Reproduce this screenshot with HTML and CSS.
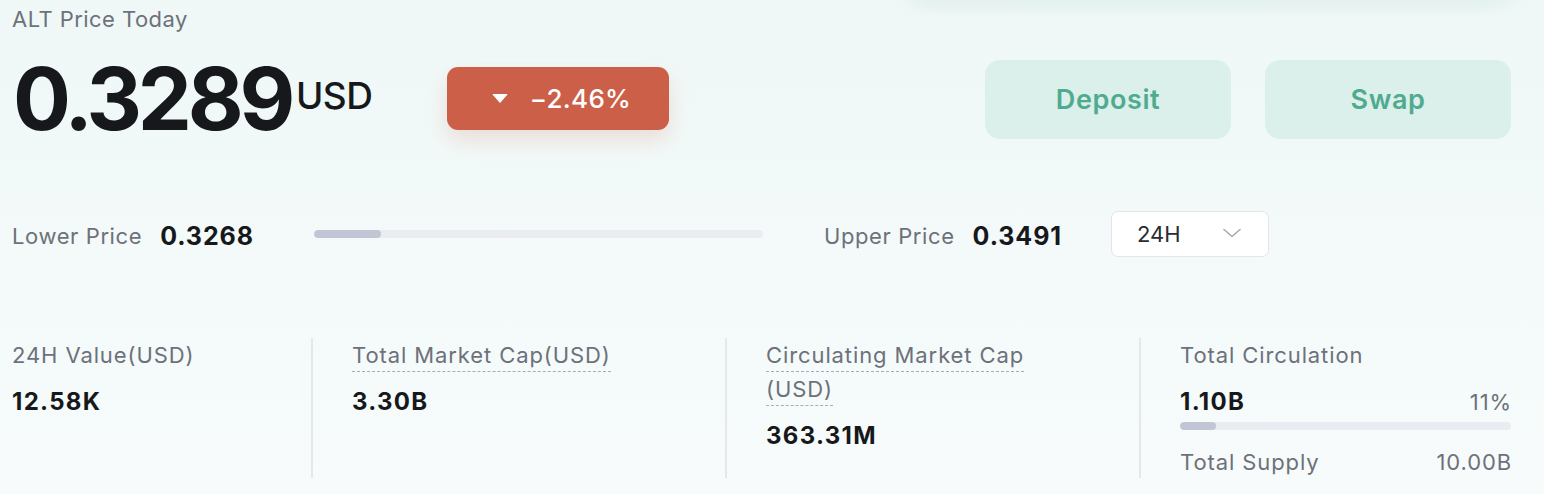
FILE: index.html
```html
<!DOCTYPE html>
<html lang="en">
<head>
<meta charset="utf-8">
<title>ALT Price Today</title>
<link rel="stylesheet" href="styles.css">
</head>
<body>
<div class="glow"></div>
<main class="page">
  <div class="title">ALT Price Today</div>

  <section class="hero">
    <div class="price">
      <span class="price-num">0.3289</span>
      <span class="price-unit">USD</span>
    </div>
    <div class="change">
      <svg class="change-icon" width="16" height="9" viewBox="0 0 16 9"><path d="M1 0.5 H15 L8 8.5 Z" fill="#fff" stroke="#fff" stroke-width="1" stroke-linejoin="round"/></svg>
      <span class="change-text">−2.46%</span>
    </div>
    <div class="actions">
      <button class="btn">Deposit</button>
      <button class="btn">Swap</button>
    </div>
  </section>

  <section class="range">
    <div class="range-side range-low">
      <span class="range-label">Lower Price</span>
      <span class="range-value">0.3268</span>
    </div>
    <div class="track range-track"><div class="track-fill" style="width:15%"></div></div>
    <div class="range-side range-high">
      <span class="range-label">Upper Price</span>
      <span class="range-value">0.3491</span>
    </div>
    <div class="select">
      <span>24H</span>
      <svg width="18" height="10" viewBox="0 0 18 10"><path d="M1 1.5 L9 8.5 L17 1.5" fill="none" stroke="#a6aab3" stroke-width="1.6" stroke-linecap="round" stroke-linejoin="round"/></svg>
    </div>
  </section>

  <section class="stats">
    <div class="stat stat-first">
      <div class="stat-label">24H Value(USD)</div>
      <div class="stat-value">12.58K</div>
    </div>
    <div class="stat">
      <div class="stat-label"><span class="dashed">Total Market Cap(USD)</span></div>
      <div class="stat-value">3.30B</div>
    </div>
    <div class="stat">
      <div class="stat-label narrow"><span class="dashed">Circulating Market Cap (USD)</span></div>
      <div class="stat-value">363.31M</div>
    </div>
    <div class="stat">
      <div class="stat-label">Total Circulation</div>
      <div class="stat-row">
        <span class="stat-value">1.10B</span>
        <span class="stat-muted end">11%</span>
      </div>
      <div class="track circ-track"><div class="track-fill" style="width:11%"></div></div>
      <div class="stat-row supply">
        <span class="stat-muted">Total Supply</span>
        <span class="stat-muted end">10.00B</span>
      </div>
    </div>
  </section>
</main>
</body>
</html>
```

FILE: styles.css
```css
* { box-sizing: border-box; }

html, body {
  margin: 0;
  padding: 0;
}

body {
  width: 1544px;
  height: 494px;
  overflow: hidden;
  position: relative;
  font-family: Inter, "Noto Sans", "DejaVu Sans", sans-serif;
  color: #16181c;
  background: linear-gradient(180deg, #eff8f7 0%, #f3faf9 50%, #f7fbfb 100%);
}

.glow {
  position: absolute;
  top: -30px;
  left: 900px;
  width: 620px;
  height: 40px;
  border-radius: 0 0 30px 30px;
  background: #e2f0ed;
  filter: blur(6px);
  opacity: 0.8;
}

.page {
  position: relative;
  padding: 5px 33px 0 12px;
}

.title {
  font-size: 22px;
  line-height: 28px;
  letter-spacing: 0.45px;
  color: #6d717a;
}

/* hero */
.hero {
  display: flex;
  align-items: center;
  height: 80px;
  margin-top: 26px;
}

.price {
  display: flex;
  align-items: center;
}

.price-num {
  font-size: 86px;
  line-height: 80px;
  font-weight: 700;
  letter-spacing: -4.3px;
  margin-left: 1px;
}

.price-unit {
  font-size: 37px;
  line-height: 38px;
  font-weight: 500;
  margin-left: 5px;
  margin-top: -6px;
  letter-spacing: -0.5px;
}

.change {
  display: flex;
  align-items: center;
  justify-content: center;
  gap: 22px;
  width: 222px;
  height: 63px;
  margin-left: 75px;
  margin-top: -2px;
  border-radius: 11px;
  background: #cb5f48;
  box-shadow: 0 10px 22px rgba(203, 95, 72, 0.18);
  color: #fff;
  padding-left: 6px;
}

.change-icon { display: block; }

.change-text {
  font-size: 26px;
  font-weight: 500;
  letter-spacing: 0.3px;
}

.actions {
  display: flex;
  gap: 34px;
  margin-left: auto;
}

.btn {
  width: 246px;
  height: 79px;
  border: 0;
  border-radius: 15px;
  background: #dbefeb;
  color: #4fab90;
  font-family: inherit;
  font-size: 27px;
  font-weight: 600;
  letter-spacing: 0.6px;
  padding: 0;
}

/* range */
.range {
  display: flex;
  align-items: center;
  height: 46px;
  margin-top: 72px;
}

.range-side {
  display: flex;
  align-items: center;
  gap: 18px;
  padding-top: 3px;
}

.range-low { width: 302px; }
.range-high { margin-left: 61px; }

.range-label {
  font-size: 22px;
  letter-spacing: 0.6px;
  color: #6d717a;
}

.range-value {
  font-size: 25px;
  font-weight: 700;
  letter-spacing: 0.9px;
}

.track {
  height: 8px;
  border-radius: 4px;
  background: #eaecf1;
  overflow: hidden;
}

.track-fill {
  height: 100%;
  border-radius: 4px;
  background: #c2c6d4;
}

.range-track {
  width: 449px;
  margin-top: -1px;
}

.select {
  display: flex;
  align-items: center;
  justify-content: space-between;
  width: 158px;
  height: 46px;
  margin-left: 49px;
  padding: 0 27px 0 25px;
  background: #fff;
  border: 1.5px solid #e3e5e9;
  border-radius: 7px;
  font-size: 22px;
  color: #2a2c31;
}

.select svg { display: block; margin-top: -2px; }

/* stats */
.stats {
  display: grid;
  grid-template-columns: 299px 414px 414px 1fr;
  margin-top: 81px;
  height: 140px;
}

.stat {
  border-left: 2px solid #e5e7ea;
  padding-left: 39px;
}

.stat-first {
  border-left: 0;
  padding-left: 0;
}

.stat-label {
  font-size: 22px;
  line-height: 34px;
  letter-spacing: 0.9px;
  color: #6d717a;
}

.stat-label.narrow { max-width: 300px; }

.dashed {
  border-bottom: 1.5px dashed #a8acb5;
  padding-bottom: 3px;
}

.stat-value {
  display: block;
  margin-top: 14px;
  font-size: 24px;
  line-height: 32px;
  font-weight: 700;
  letter-spacing: 1.3px;
}

.stat-row {
  display: flex;
  justify-content: space-between;
  align-items: baseline;
}

.stat-row .stat-value { margin-top: 14px; }

.stat-muted {
  font-size: 22px;
  line-height: 32px;
  letter-spacing: 0.9px;
  color: #6d717a;
}

.stat-muted.end { margin-right: -1px; }

.circ-track { margin-top: 4px; }

.supply { margin-top: 16px; }
```
